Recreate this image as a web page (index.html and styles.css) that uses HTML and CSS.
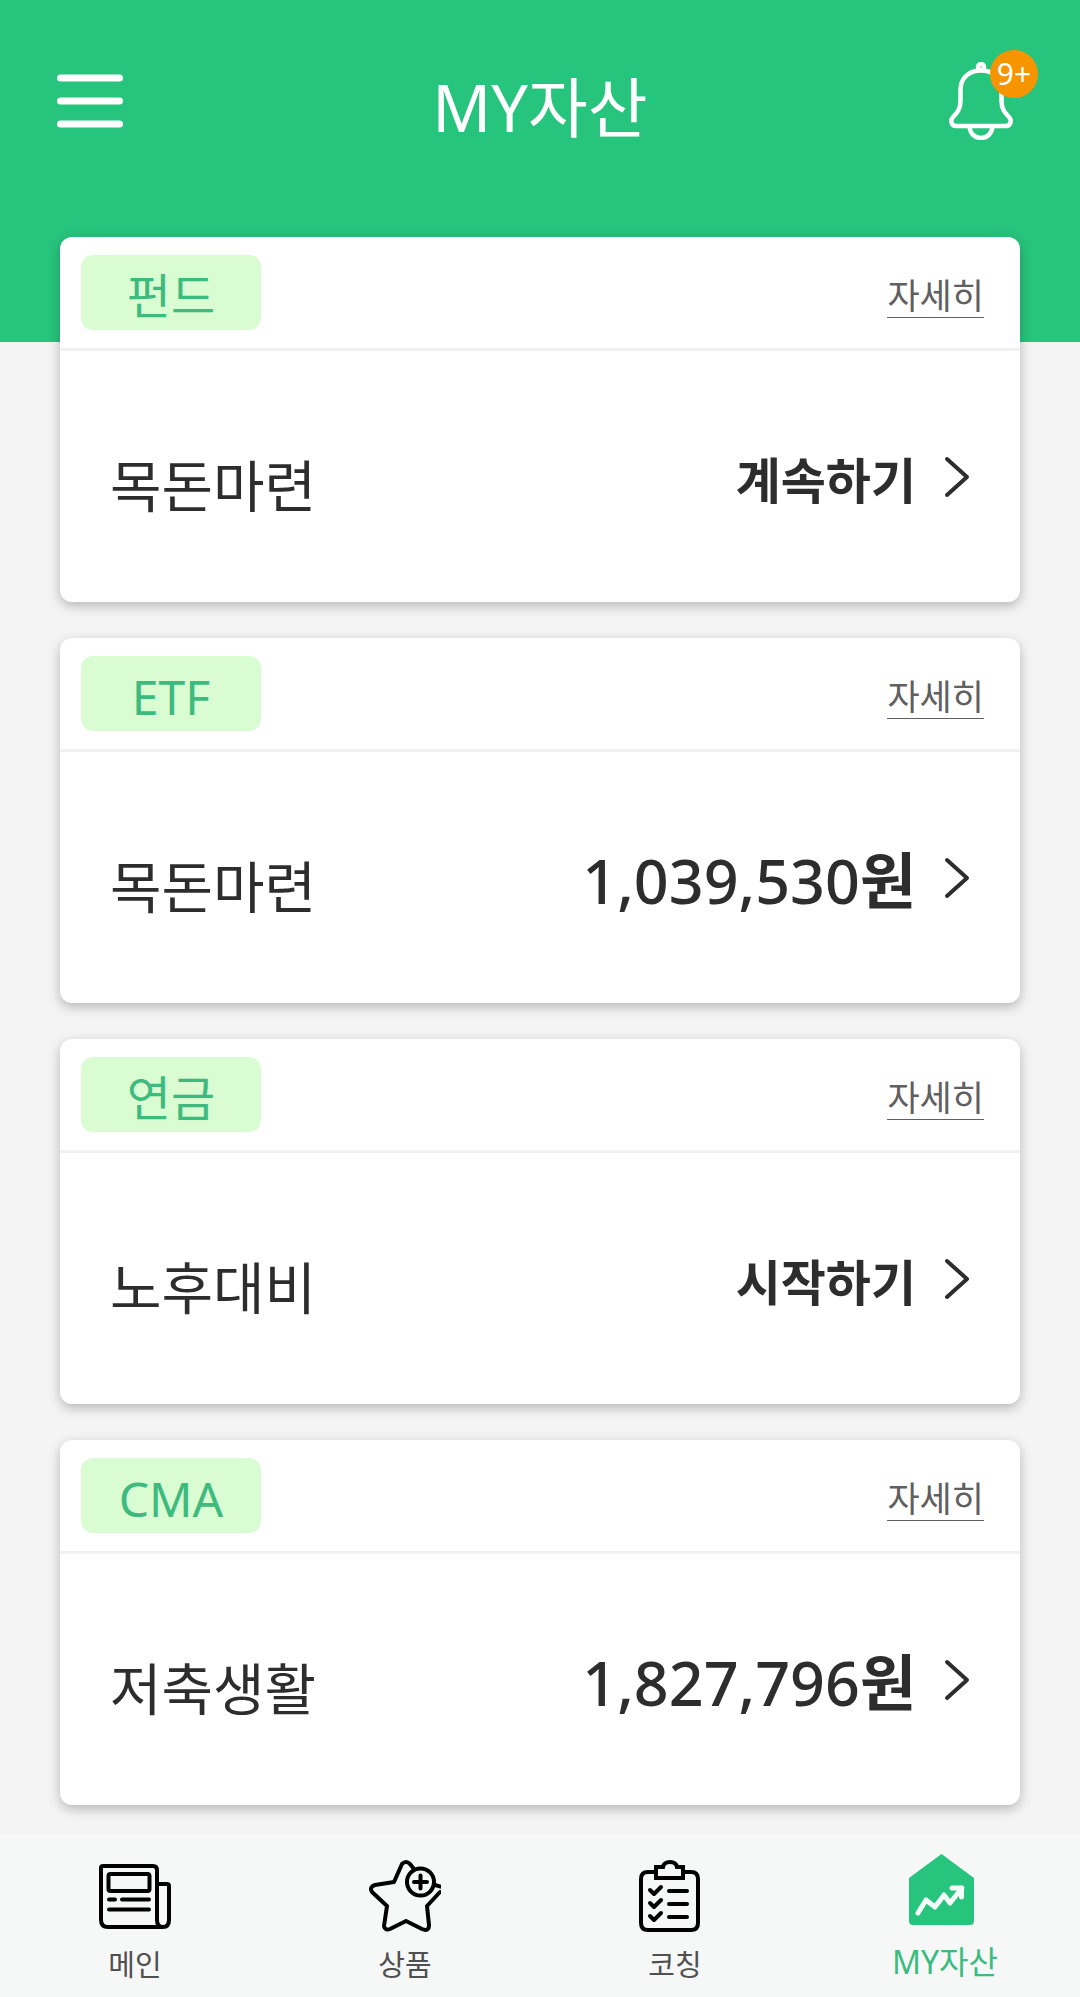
FILE: index.html
```html
<!DOCTYPE html>
<html lang="ko">
<head>
<meta charset="utf-8">
<meta name="viewport" content="width=device-width, initial-scale=1">
<title>MY자산</title>
<link rel="stylesheet" href="styles.css">
</head>
<body class="app">
<header class="top">
  <button class="icon-button" type="button" aria-label="메뉴">
    <svg width="66" height="78" viewBox="0 0 66 78" fill="none" stroke="#fff" stroke-width="7" stroke-linecap="round"><path d="M3.500 16H62.500M3.500 39H62.500M3.500 62H62.500"/></svg>
  </button>
  <h1 class="title">MY자산</h1>
  <button class="icon-button bell" type="button" aria-label="알림">
    <svg width="66" height="78" viewBox="0 0 66 78" fill="none" stroke="#fff" stroke-width="4.500"><circle cx="33" cy="5" r="3"/><path d="M8 64C3 64 2 58 5 55C9 51 12.500 47 12.500 39V28C12.500 15 22 8.500 33 8.500S53.500 15 53.500 28V39C53.500 47 57 51 61 55C64 58 63 64 58 64Z"/><path d="M21.500 64C22 80 44 80 44.500 64"/></svg>
    <span class="badge">9+</span>
  </button>
</header>
<main class="cards">
  <section class="card">
    <div class="card-head"><h2 class="tag">펀드</h2><a class="detail" href="#fund">자세히</a></div>
    <a class="card-body" href="#fund-go"><span class="goal">목돈마련</span><span class="action">계속하기</span><svg class="chevron" width="26" height="42" viewBox="0 0 26 42"><path d="M3 3L23 21L3 39"/></svg></a>
  </section>
  <section class="card">
    <div class="card-head"><h2 class="tag">ETF</h2><a class="detail" href="#etf">자세히</a></div>
    <a class="card-body" href="#etf-go"><span class="goal">목돈마련</span><span class="amount">1,039,530<span class="unit">원</span></span><svg class="chevron" width="26" height="42" viewBox="0 0 26 42"><path d="M3 3L23 21L3 39"/></svg></a>
  </section>
  <section class="card">
    <div class="card-head"><h2 class="tag">연금</h2><a class="detail" href="#pension">자세히</a></div>
    <a class="card-body" href="#pension-go"><span class="goal">노후대비</span><span class="action">시작하기</span><svg class="chevron" width="26" height="42" viewBox="0 0 26 42"><path d="M3 3L23 21L3 39"/></svg></a>
  </section>
  <section class="card">
    <div class="card-head"><h2 class="tag">CMA</h2><a class="detail" href="#cma">자세히</a></div>
    <a class="card-body" href="#cma-go"><span class="goal">저축생활</span><span class="amount">1,827,796<span class="unit">원</span></span><svg class="chevron" width="26" height="42" viewBox="0 0 26 42"><path d="M3 3L23 21L3 39"/></svg></a>
  </section>
</main>
<nav class="tabs">
  <a class="tab" href="#main">
    <svg class="tab-icon" width="72" height="72" viewBox="0 0 72 72"><path d="M7 6H54Q58 6 58 10V60Q58 67 64 67Q70 67 70 60V26Q70 24 68 24H58M64 67H9Q2 67 2 60V8Q2 6 4 6H7"/><rect x="9.500" y="14" width="41" height="17" rx="2"/><path d="M10 39.500H16M23 39.500H50M10 49.500H50"/></svg>
    <span>메인</span>
  </a>
  <a class="tab" href="#products">
    <svg class="tab-icon" width="72" height="72" viewBox="0 0 72 72"><path d="M45 9L41 4Q37 0 33 4L25 22L6 25Q0 27 3 32L18 46L15 66Q16 71 21 69L37 61L53 69Q60 72 60 65L58 46L71 32M66 25L73 27"/><circle cx="51.500" cy="22" r="13.500"/><path d="M45 22H58M51.500 15.500V28.500"/></svg>
    <span>상품</span>
  </a>
  <a class="tab" href="#coaching">
    <svg class="tab-icon" width="72" height="72" viewBox="3 0 72 72"><path d="M20 12H12Q5 12 5 19V63Q5 70 12 70H55Q62 70 62 63V19Q62 12 55 12H47"/><path d="M20 7H27Q28 2 34 2T41 7H47V18H20Z" stroke-linejoin="miter"/><path d="M14 30L18 34L25 27M14 43L18 47L25 40M14 56L18 60L25 53M33 31H51M33 44H51M33 57H51"/></svg>
    <span>코칭</span>
  </a>
  <a class="tab tab-current" href="#assets" aria-current="page">
    <svg width="72" height="72" viewBox="3 0 72 72"><path d="M3 24L35.500 0L68 24V67Q68 71 64 71H7Q3 71 3 67Z" fill="#27c47d"/><path d="M12 59L20 46L29 53L38 41L44 49L56 34M46 34H55.500V43" fill="none" stroke="#f3fff9" stroke-width="5" stroke-linecap="round" stroke-linejoin="round"/></svg>
    <span>MY자산</span>
  </a>
</nav>
</body>
</html>
```
FILE: styles.css
```css
* { box-sizing: border-box; }
.app {
  margin: 0;
  min-height: 100vh;
  display: flex;
  flex-direction: column;
  background: #f4f4f4;
  color: #2d2d2d;
  font-family: "Noto Sans", "Noto Sans CJK KR", sans-serif;
}
.app a { color: inherit; text-decoration: none; }
.top {
  display: flex;
  justify-content: space-between;
  align-items: flex-start;
  padding: 62px 66px 196px 57px;
  background: #27c47d;
}
.icon-button {
  display: block;
  padding: 0;
  border: 0;
  background: none;
  line-height: 0;
}
.icon-button svg { display: block; }
.bell { position: relative; }
.badge {
  position: absolute;
  top: -12px;
  right: -24px;
  width: 48px;
  height: 48px;
  border-radius: 50%;
  background: #f79500;
  color: #fff;
  font: 30px/48px "Noto Sans", sans-serif;
  text-align: center;
}
.title {
  margin: 0;
  padding: 6px 0 0 9px;
  color: #fff;
  font-size: 65px;
  font-weight: 400;
  line-height: 78px;
}
.cards {
  flex: 1;
  display: flex;
  flex-direction: column;
  gap: 36px;
  margin-top: -105px;
  padding: 0 60px 30px;
}
.card {
  border-radius: 12px;
  background: #fff;
  box-shadow: 0 4px 12px rgba(0, 0, 0, 0.25);
}
.card-head {
  display: flex;
  justify-content: space-between;
  align-items: center;
  padding: 18px 36px 18px 21px;
  border-bottom: 3px solid #f1f1f1;
}
.tag {
  width: 180px;
  margin: 0;
  padding-top: 7px;
  border-radius: 12px;
  background: #d9fcd3;
  color: #3dbb7e;
  font-size: 48px;
  font-weight: 400;
  line-height: 68px;
  text-align: center;
}
.detail {
  margin-top: 8px;
  border-bottom: 1px solid #606060;
  font-size: 35px;
  line-height: 42px;
}
.app .detail { color: #606060; }
.card-body {
  display: flex;
  align-items: center;
  padding: 75px 50px;
  line-height: 86px;
}
.goal {
  flex: 1;
  padding-top: 17px;
  font-size: 56px;
  line-height: 84px;
}
.action,
.amount {
  padding-top: 7px;
  font-weight: 500;
}
.action { font-size: 49px; font-weight: 700; }
.amount { font-size: 61px; }
.unit { font-weight: 700; }
.chevron {
  margin-left: 28px;
  fill: none;
  stroke: #2d2d2d;
  stroke-width: 4;
  stroke-linecap: round;
  stroke-linejoin: round;
}
.tabs {
  display: grid;
  grid-template-columns: repeat(4, 1fr);
  background: #f6f8f8;
}
.tab {
  display: flex;
  flex-direction: column;
  align-items: center;
  gap: 8px;
  padding: 25px 0 7px;
  font-size: 29px;
  line-height: 50px;
}
.app .tab { color: #505050; }
.tab-icon {
  fill: none;
  stroke: #000;
  stroke-width: 4;
  stroke-linecap: round;
  stroke-linejoin: round;
}
.app .tab-current {
  padding-top: 19px;
  color: #3dbb7e;
  font-size: 32px;
  line-height: 56px;
}
```
